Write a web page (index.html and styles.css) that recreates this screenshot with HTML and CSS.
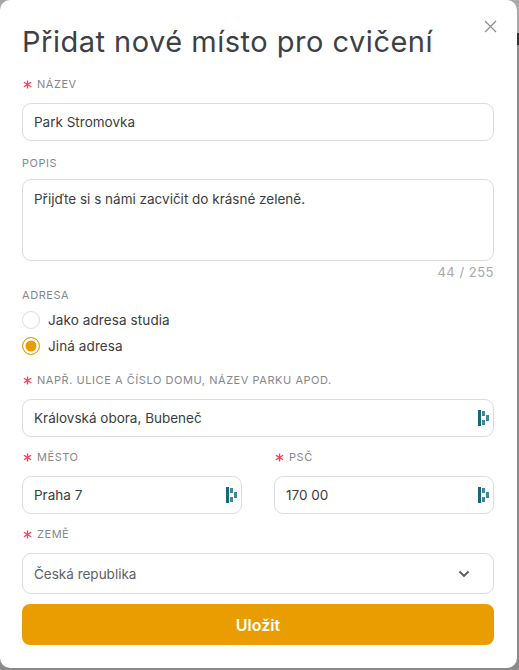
FILE: index.html
```html
<!DOCTYPE html>
<html lang="cs">
<head>
    <meta charset="UTF-8">
    <title>Přidat nové místo pro cvičení</title>
    <link rel="stylesheet" href="styles.css">
</head>
<body>
    <svg class="icon-defs" width="0" height="0">
        <symbol id="star" viewBox="0 0 10 10">
            <path d="M5 0.500V9.500M1 2.500L9 7.500M9 2.500L1 7.500" stroke="#f5405a" stroke-width="1.500" fill="none"/>
        </symbol>
        <symbol id="lastpass" viewBox="0 0 11 16">
            <path d="M0 0H3V16H0Z" fill="#14687c"/>
            <path d="M4 1H7V6H4ZM4 10H7V15H4ZM8 5H11V11H8Z" fill="#3f8899"/>
        </symbol>
    </svg>
    <div class="modal">
        <span class="close">
            <svg width="13" height="13" viewBox="0 0 13 13"><path d="M1 1L12 12M12 1L1 12" stroke="#8a8d91" stroke-width="1.200" fill="none"/></svg>
        </span>
        <h1 class="title">Přidat nové místo pro cvičení</h1>

        <div class="label label-first"><svg class="star"><use href="#star"/></svg>NÁZEV</div>
        <div class="input">Park Stromovka</div>

        <div class="label label-popis">POPIS</div>
        <div class="input textarea">Přijďte si s námi zacvičit do krásné zeleně.</div>
        <div class="counter">44 / 255</div>

        <div class="label label-adresa">ADRESA</div>
        <div class="radio-row"><span class="radio"></span>Jako adresa studia</div>
        <div class="radio-row"><span class="radio checked"></span>Jiná adresa</div>

        <div class="label label-street"><svg class="star"><use href="#star"/></svg>NAPŘ. ULICE A ČÍSLO DOMU, NÁZEV PARKU APOD.</div>
        <div class="input with-icon">Královská obora, Bubeneč
            <svg class="pin"><use href="#lastpass"/></svg>
        </div>

        <div class="split">
            <div class="split-col">
                <div class="label label-split"><svg class="star"><use href="#star"/></svg>MĚSTO</div>
                <div class="input with-icon">Praha 7
                    <svg class="pin"><use href="#lastpass"/></svg>
                </div>
            </div>
            <div class="split-col">
                <div class="label label-split"><svg class="star"><use href="#star"/></svg>PSČ</div>
                <div class="input with-icon">170 00
                    <svg class="pin"><use href="#lastpass"/></svg>
                </div>
            </div>
        </div>

        <div class="label label-split"><svg class="star"><use href="#star"/></svg>ZEMĚ</div>
        <div class="input select">Česká republika
            <svg width="12" height="8" viewBox="0 0 12 8"><path d="M1.500 1.500L6 6L10.500 1.500" stroke="#55585c" stroke-width="1.800" fill="none"/></svg>
        </div>

        <button class="save-btn">Uložit</button>
    </div>
</body>
</html>
```

FILE: styles.css
```css
html, body {
    height: 100%;
}
body {
    margin: 0;
    background: linear-gradient(#a8a8a8 0, #a8a8a8 33px, #333 33px, #333 45px, #8a8a8a 45px);
    font-family: Inter, "Open Sans", Arial, sans-serif;
    color: #3a3d41;
    overflow: hidden;
}
.icon-defs {
    position: absolute;
}
.modal {
    position: relative;
    box-sizing: border-box;
    width: 517px;
    height: 668px;
    padding: 0 23px 0 22px;
    background: #fff;
    border-radius: 10px;
}
.close {
    position: absolute;
    top: 20px;
    right: 20px;
    line-height: 0;
}
.title {
    margin: 0;
    padding-top: 24px;
    font-size: 29px;
    line-height: 36px;
    font-weight: 400;
    letter-spacing: 0.500px;
    color: #3d4145;
    white-space: nowrap;
}
.label {
    display: flex;
    align-items: center;
    height: 16px;
    font-size: 11px;
    letter-spacing: 0.550px;
    color: #85888c;
    white-space: nowrap;
}
.label-first {
    margin-top: 16px;
    margin-bottom: 11px;
}
.label-popis {
    margin-top: 14px;
    margin-bottom: 8px;
}
.label-adresa {
    margin-top: 7px;
    margin-bottom: 4px;
}
.label-street {
    margin-top: 13px;
    margin-bottom: 11px;
}
.label-split {
    margin-top: 12px;
    margin-bottom: 11px;
}
.star {
    flex: none;
    width: 9px;
    height: 9px;
    margin: 0 5px 0 1px;
}
.input {
    box-sizing: border-box;
    display: flex;
    align-items: center;
    justify-content: space-between;
    height: 38px;
    padding: 0 11px;
    border: 1px solid #dcdcdc;
    border-radius: 9px;
    font-size: 13.500px;
    color: #3a3d41;
    background: #fff;
}
.textarea {
    display: block;
    height: 82px;
    padding-top: 10px;
    line-height: 18px;
}
.counter {
    margin-top: 3px;
    height: 16px;
    line-height: 16px;
    text-align: right;
    font-size: 13px;
    letter-spacing: 0.500px;
    color: #a6a8aa;
}
.radio-row {
    display: flex;
    align-items: center;
    gap: 8px;
    height: 26px;
    font-size: 13.500px;
    letter-spacing: 0.100px;
}
.radio {
    box-sizing: border-box;
    width: 18px;
    height: 18px;
    border: 1px solid #dcdcdc;
    border-radius: 50%;
}
.radio.checked {
    border-color: #e99d00;
    background: #e99d00;
    box-shadow: inset 0 0 0 2.500px #fff;
}
.with-icon {
    padding-right: 4px;
}
.pin {
    flex: none;
    width: 11px;
    height: 16px;
}
.split {
    display: flex;
    gap: 32px;
}
.split-col {
    flex: 1;
}
.select {
    height: 41px;
    color: #5e6165;
    padding-right: 23px;
}
.save-btn {
    display: block;
    width: 100%;
    height: 41px;
    margin-top: 10px;
    border: none;
    border-radius: 8px;
    background: #e99d00;
    color: #fff;
    font-family: inherit;
    font-size: 16px;
    font-weight: 600;
}
```
